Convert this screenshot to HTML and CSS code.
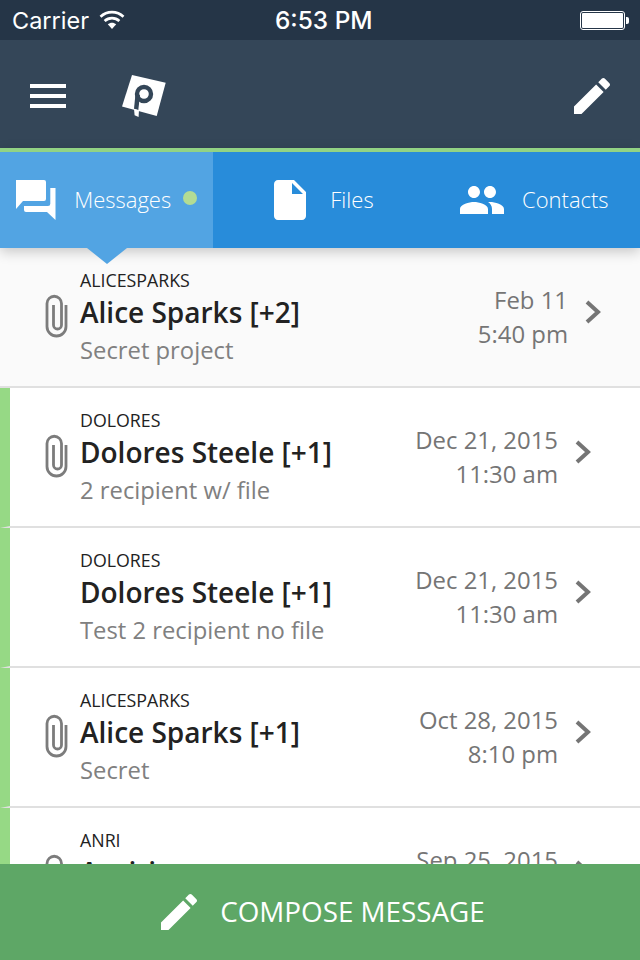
FILE: index.html
```html
<!DOCTYPE html>
<html lang="en">
<head>
    <meta charset="UTF-8">
    <meta name="viewport" content="width=device-width, initial-scale=1.0">
    <title>Messages</title>
    <link rel="stylesheet" href="styles.css">
</head>
<body>
<div class="status-bar">
    <div class="status-left">
        <span class="carrier">Carrier</span>
        <svg class="wifi" width="26" height="20" viewBox="0 0 26 20">
            <path d="M1.500 6.800C7.900.6 18.100.6 24.500 6.800" fill="none" stroke="#fff" stroke-width="2.600"/>
            <path d="M5.600 11C9.800 7.100 16.200 7.100 20.400 11" fill="none" stroke="#fff" stroke-width="2.600"/>
            <path d="M8.800 14.300c2.400-2.200 6-2.200 8.400 0L13 19z" fill="#fff"/>
        </svg>
    </div>
    <span class="clock">6:53 PM</span>
    <div class="battery"><div class="battery-fill"></div></div>
</div>

<header class="nav">
    <div class="burger"><span></span><span></span><span></span></div>
    <svg class="logo" width="48" height="48" viewBox="0 0 48 48">
        <path d="M11 3L44.700 10.700L35.700 44L1 34.500z" fill="#fff"/>
        <circle cx="23" cy="22" r="7" fill="none" stroke="#344658" stroke-width="4.400"/>
        <path d="M14.600 21L19 23L17.300 38L13 36.800z" fill="#344658"/>
        <path d="M13 37L18 38.300L17.600 45L13.600 43.300z" fill="#fff"/>
    </svg>
    <svg class="pencil" width="48" height="48" viewBox="0 0 24 24">
        <path fill="#fff" d="M3 17.250V21h3.750L17.810 9.940l-3.750-3.750L3 17.250zM20.710 7.040c.39-.39.39-1.020 0-1.410l-2.340-2.340c-.39-.39-1.020-.39-1.410 0l-1.830 1.830 3.750 3.750 1.830-1.830z"/>
    </svg>
</header>

<nav class="tabs">
    <div class="tab active">
        <svg width="44" height="44" viewBox="0 0 44 44">
            <path fill="#fff" d="M4 2h28a2 2 0 0 1 2 2v17a2 2 0 0 1-2 2H11l-7 8z"/>
            <path fill="#fff" d="M38.300 10H43.500V42L35 34H14a2 2 0 0 1-2-2V28H36a2.300 2.300 0 0 0 2.300-2.300z"/>
        </svg>
        <span>Messages</span>
        <i class="dot"></i>
    </div>
    <div class="tab">
        <svg width="48" height="48" viewBox="0 0 24 24">
            <path fill="#fff" d="M6 2c-1.100 0-1.990.9-1.990 2L4 20c0 1.100.89 2 1.990 2H18c1.100 0 2-.9 2-2V8l-6-6H6zm7 7V3.500L18.500 9H13z"/>
        </svg>
        <span>Files</span>
    </div>
    <div class="tab">
        <svg width="48" height="48" viewBox="0 0 24 24">
            <path fill="#fff" d="M16 11c1.660 0 2.990-1.340 2.990-3S17.660 5 16 5c-1.660 0-3 1.340-3 3s1.340 3 3 3zm-8 0c1.660 0 2.990-1.340 2.990-3S9.660 5 8 5C6.340 5 5 6.340 5 8s1.340 3 3 3zm0 2c-2.330 0-7 1.170-7 3.500V19h14v-2.500c0-2.330-4.670-3.500-7-3.500zm8 0c-.29 0-.62.02-.97.05 1.160.84 1.970 1.970 1.970 3.450V19h6v-2.500c0-2.330-4.670-3.500-7-3.500z"/>
        </svg>
        <span>Contacts</span>
    </div>
    <div class="tab-arrow"></div>
</nav>

<main class="list">
    <div class="row selected">
        <svg class="clip" width="24" height="46" viewBox="0 0 24 46"><path d="M22 11V32.500a9.500 9.500 0 0 1-19 0V9.500a7.250 7.250 0 0 1 14.500 0V31a4 4 0 0 1-8 0V11"/></svg>
        <div class="row-text">
            <div class="user">ALICESPARKS</div>
            <div class="name">Alice Sparks [+2]</div>
            <div class="subject">Secret project</div>
        </div>
        <div class="when">Feb 11<br>5:40 pm</div>
        <svg class="chev" width="18" height="26" viewBox="0 0 18 26"><path d="M3 3L14 13L3 23"/></svg>
    </div>
    <div class="row unread">
        <svg class="clip" width="24" height="46" viewBox="0 0 24 46"><path d="M22 11V32.500a9.500 9.500 0 0 1-19 0V9.500a7.250 7.250 0 0 1 14.500 0V31a4 4 0 0 1-8 0V11"/></svg>
        <div class="row-text">
            <div class="user">DOLORES</div>
            <div class="name">Dolores Steele [+1]</div>
            <div class="subject">2 recipient w/ file</div>
        </div>
        <div class="when">Dec 21, 2015<br>11:30 am</div>
        <svg class="chev" width="18" height="26" viewBox="0 0 18 26"><path d="M3 3L14 13L3 23"/></svg>
    </div>
    <div class="row unread no-file">
        <div class="row-text">
            <div class="user">DOLORES</div>
            <div class="name">Dolores Steele [+1]</div>
            <div class="subject">Test 2 recipient no file</div>
        </div>
        <div class="when">Dec 21, 2015<br>11:30 am</div>
        <svg class="chev" width="18" height="26" viewBox="0 0 18 26"><path d="M3 3L14 13L3 23"/></svg>
    </div>
    <div class="row unread">
        <svg class="clip" width="24" height="46" viewBox="0 0 24 46"><path d="M22 11V32.500a9.500 9.500 0 0 1-19 0V9.500a7.250 7.250 0 0 1 14.500 0V31a4 4 0 0 1-8 0V11"/></svg>
        <div class="row-text">
            <div class="user">ALICESPARKS</div>
            <div class="name">Alice Sparks [+1]</div>
            <div class="subject">Secret</div>
        </div>
        <div class="when">Oct 28, 2015<br>8:10 pm</div>
        <svg class="chev" width="18" height="26" viewBox="0 0 18 26"><path d="M3 3L14 13L3 23"/></svg>
    </div>
    <div class="row unread">
        <svg class="clip" width="24" height="46" viewBox="0 0 24 46"><path d="M22 11V32.500a9.500 9.500 0 0 1-19 0V9.500a7.250 7.250 0 0 1 14.500 0V31a4 4 0 0 1-8 0V11"/></svg>
        <div class="row-text">
            <div class="user">ANRI</div>
            <div class="name">Anriri</div>
        </div>
        <div class="when">Sep 25, 2015</div>
        <svg class="chev" width="18" height="26" viewBox="0 0 18 26"><path d="M3 3L14 13L3 23"/></svg>
    </div>
</main>

<footer class="compose">
    <svg width="48" height="48" viewBox="0 0 24 24">
        <path fill="#fff" d="M3 17.250V21h3.750L17.810 9.940l-3.750-3.750L3 17.250zM20.710 7.040c.39-.39.39-1.020 0-1.410l-2.340-2.340c-.39-.39-1.020-.39-1.410 0l-1.830 1.830 3.750 3.750 1.830-1.830z"/>
    </svg>
    <span>COMPOSE MESSAGE</span>
</footer>
</body>
</html>
```

FILE: styles.css
```css
html, body {
    margin: 0;
    height: 100%;
}

body {
    font-family: "Open Sans", sans-serif;
    background-color: #ffffff;
    display: flex;
    flex-direction: column;
    height: 960px;
    overflow: hidden;
}

/* Status bar */
.status-bar {
    flex: none;
    height: 40px;
    background-color: #253547;
    color: #ffffff;
    font-family: Inter, sans-serif;
    font-size: 23.500px;
    display: flex;
    align-items: center;
    justify-content: space-between;
    padding: 0 15px 0 12px;
    position: relative;
}

.status-left {
    display: flex;
    align-items: center;
    gap: 10px;
}

.clock {
    font-size: 24.400px;
    font-weight: 500;
    position: absolute;
    left: 275px;
}

.battery {
    width: 45px;
    height: 19px;
    box-sizing: border-box;
    border: 1px solid #ffffff;
    border-radius: 3px;
    padding: 1px;
    position: relative;
}

.battery::after {
    content: "";
    position: absolute;
    right: -5px;
    top: 5px;
    width: 3px;
    height: 7px;
    background-color: #ffffff;
    border-radius: 0 2px 2px 0;
}

.battery-fill {
    height: 100%;
    background-color: #ffffff;
    border-radius: 1px;
}

/* Top nav */
.nav {
    flex: none;
    height: 108px;
    box-sizing: border-box;
    background-color: #344658;
    display: flex;
    align-items: center;
    padding: 4px 24px 0 30px;
}

.burger {
    width: 36px;
    display: flex;
    flex-direction: column;
    gap: 6px;
}

.burger span {
    height: 4px;
    background-color: #ffffff;
}

.logo {
    margin-left: 55px;
}

.pencil {
    margin-left: auto;
}

/* Tabs */
.tabs {
    flex: none;
    height: 96px;
    border-top: 4px solid #92d384;
    background-color: #288cda;
    display: flex;
    position: relative;
    z-index: 2;
    box-shadow: 0 4px 12px rgba(0, 0, 0, 0.2);
}

.tab {
    flex: 1;
    display: flex;
    align-items: center;
    justify-content: center;
    gap: 16px;
    color: #ffffff;
    font-size: 22px;
    font-weight: 300;
}

.tab span {
    padding-bottom: 2px;
}

.tab.active {
    background-color: #52a4e3;
}

.tab.active svg {
    margin-right: 2px;
}

.dot {
    width: 14px;
    height: 14px;
    border-radius: 50%;
    background-color: #b3dc94;
    margin: -4px 4px 0 -4px;
}

.tab-arrow {
    position: absolute;
    left: 87px;
    top: 96px;
    border-left: 20px solid transparent;
    border-right: 20px solid transparent;
    border-top: 16px solid #52a4e3;
}

/* Message list */
.list {
    flex: 1;
    min-height: 0;
    overflow: hidden;
}

.row {
    height: 140px;
    box-sizing: border-box;
    border-bottom: 2px solid #e0e0e0;
    padding: 21px 38px 0 44px;
    display: flex;
    align-items: flex-start;
}

.row.selected {
    background-color: #fafafa;
}

.row.unread {
    border-left: 10px solid #96d985;
    padding-left: 34px;
    padding-right: 48px;
}

.row.no-file .row-text {
    margin-left: 36px;
}

.clip {
    flex: none;
    width: 24px;
    margin: 25px 12px 0 0;
    fill: none;
    stroke: #7c7c7c;
    stroke-width: 2.800;
}

.row-text {
    flex: 1;
    min-width: 0;
}

.user {
    font-size: 17.800px;
    line-height: 22px;
    color: #222222;
}

.name {
    font-size: 28px;
    line-height: 42px;
    font-weight: 600;
    color: #222222;
}

.subject {
    font-size: 23.800px;
    line-height: 34px;
    color: #808080;
}

.when {
    font-size: 23.900px;
    line-height: 34px;
    color: #757575;
    text-align: right;
    margin-top: 14px;
}

.chev {
    flex: none;
    margin: 30px 0 0 16px;
    fill: none;
    stroke: #757575;
    stroke-width: 4;
}

/* Compose button */
.compose {
    flex: none;
    height: 96px;
    background-color: #5ea766;
    color: #ffffff;
    font-size: 27.800px;
    display: flex;
    align-items: center;
    justify-content: center;
    gap: 17px;
}

.compose span {
    padding-bottom: 2px;
}
```
